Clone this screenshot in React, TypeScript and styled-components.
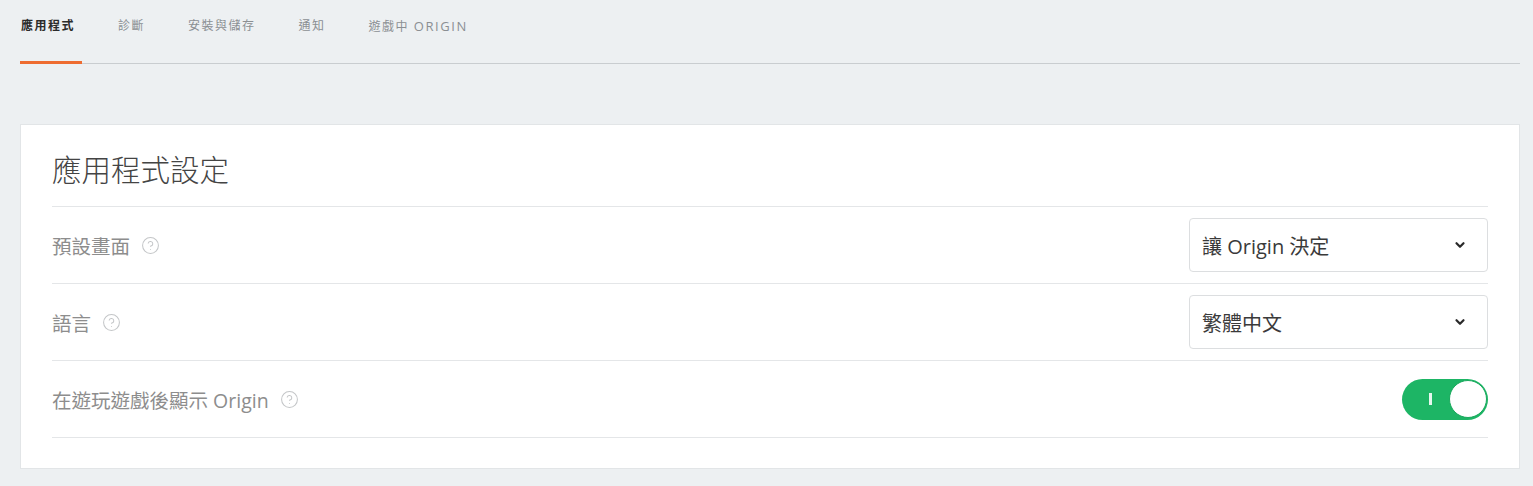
import styled, { createGlobalStyle } from 'styled-components';
import { ChevronDown, CircleHelp } from 'lucide-react';

const GlobalStyle = createGlobalStyle`
  html, body {
    margin: 0;
    padding: 0;
    background: #edf0f2;
    font-family: 'Open Sans', 'Noto Sans CJK TC', 'Noto Sans', sans-serif;
  }
`;

const Page = styled.div`
  padding: 0 13px 20px 20px;
`;

const TabBar = styled.div`
  display: flex;
  gap: 35px;
  padding-top: 19px;
  border-bottom: 1px solid #c9cdd0;
`;

const Tab = styled.div<{ active?: boolean }>`
  height: 14px;
  font-size: 12px;
  line-height: 14px;
  letter-spacing: 1.5px;
  padding: 0 7px 28px 1px;
  margin-bottom: -1px;
  color: ${(p) => (p.active ? '#2b2b2b' : '#8b8f93')};
  font-weight: ${(p) => (p.active ? 600 : 400)};
  border-bottom: 3px solid ${(p) => (p.active ? '#ee6c31' : 'transparent')};
`;

const Latin = styled.span`
  font-size: 13px;
  line-height: 14px;
  letter-spacing: 1.6px;
`;

const Card = styled.div`
  margin-top: 60px;
  background: #fff;
  border: 1px solid #e2e5e7;
  padding: 0 31px 30px 31px;
`;

const Title = styled.h2`
  margin: 0;
  height: 82px;
  display: flex;
  align-items: center;
  padding-top: 6px;
  box-sizing: border-box;
  font-size: 29.5px;
  font-weight: 300;
  color: #444;
  border-bottom: 1px solid #e4e6e8;
`;

const Row = styled.div`
  display: flex;
  align-items: center;
  justify-content: space-between;
  height: 76px;
  border-bottom: 1px solid #e4e6e8;
`;

const Label = styled.div`
  display: flex;
  align-items: center;
  gap: 11px;
  font-size: 19.5px;
  color: #8d8d8d;
`;

const Help = styled(CircleHelp)`
  color: #c4c6c8;
`;

const Select = styled.div`
  width: 299px;
  height: 54px;
  box-sizing: border-box;
  border: 1px solid #dcdee0;
  border-radius: 4px;
  display: flex;
  align-items: center;
  justify-content: space-between;
  padding: 0 20px 0 12px;
  font-size: 20px;
  color: #3a3a3a;
`;

const Toggle = styled.div<{ on?: boolean }>`
  width: 86px;
  height: 41px;
  box-sizing: border-box;
  border-radius: 21px;
  background: ${(p) => (p.on ? '#1db565' : '#cfd3d6')};
  display: flex;
  align-items: center;
  justify-content: space-between;
  padding: 0 1px 0 27px;
`;

const Mark = styled.span`
  width: 3px;
  height: 12px;
  background: #e6f7ee;
`;

const Knob = styled.span`
  width: 38px;
  height: 38px;
  box-sizing: border-box;
  border-radius: 50%;
  background: #fff;
  border: 1.5px solid #1aa95d;
`;

export default function App() {
  return (
    <Page>
      <GlobalStyle />
      <TabBar>
        <Tab active>應用程式</Tab>
        <Tab>診斷</Tab>
        <Tab>安裝與儲存</Tab>
        <Tab>通知</Tab>
        <Tab>遊戲中 <Latin>ORIGIN</Latin></Tab>
      </TabBar>
      <Card>
        <Title>應用程式設定</Title>
        <Row>
          <Label>預設畫面 <Help size={19} strokeWidth={1.3} /></Label>
          <Select>
            <span>讓 Origin 決定</span>
            <ChevronDown size={14} strokeWidth={3.8} color='#2a2a2a' />
          </Select>
        </Row>
        <Row>
          <Label>語言 <Help size={19} strokeWidth={1.3} /></Label>
          <Select>
            <span>繁體中文</span>
            <ChevronDown size={14} strokeWidth={3.8} color='#2a2a2a' />
          </Select>
        </Row>
        <Row>
          <Label>在遊玩遊戲後顯示 Origin <Help size={19} strokeWidth={1.3} /></Label>
          <Toggle on>
            <Mark />
            <Knob />
          </Toggle>
        </Row>
      </Card>
    </Page>
  );
}
